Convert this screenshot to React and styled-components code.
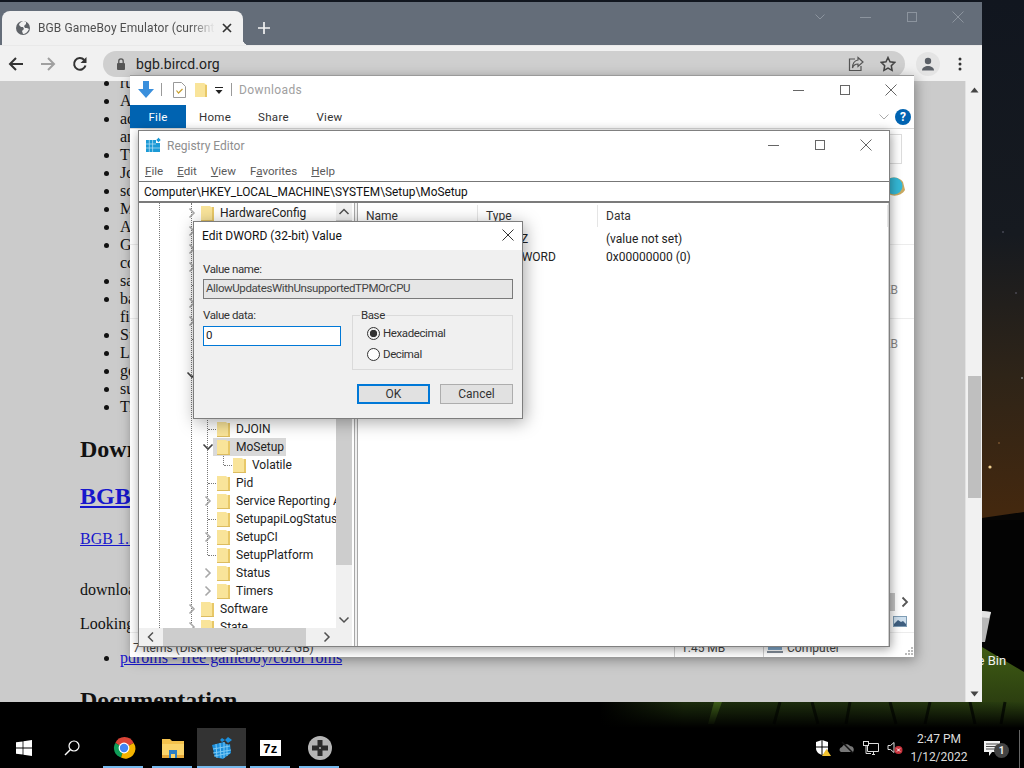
import React from "react";
import styled, { createGlobalStyle } from "styled-components";

const Global = createGlobalStyle`
  html, body { margin: 0; padding: 0; background: #000; }
  * { box-sizing: border-box; }
`;

const UI = `"Roboto", "Noto Sans", sans-serif`;

const Desktop = styled.div`
  position: relative;
  width: 1024px;
  height: 768px;
  overflow: hidden;
  display: flex;
  flex-direction: column;
  justify-content: flex-end;
  font-family: ${UI};
  font-size: 12px;
  color: #111;
`;
const Wallpaper = styled.svg`
  position: absolute;
  inset: 0;
`;
const RecycleIcon = styled.div`
  position: absolute;
  right: 15px;
  top: 604px;
  width: 72px;
  display: flex;
  flex-direction: column;
  align-items: center;
  gap: 9px;
  color: #f2f2f2;
  font-size: 13px;
  line-height: 16px;
  white-space: nowrap;
`;

/* ---------- browser ---------- */
const Browser = styled.section`
  position: absolute;
  left: 0;
  top: 2px;
  width: 982px;
  height: 700px;
  display: flex;
  flex-direction: column;
`;
const TabStrip = styled.div`
  height: 43px;
  flex: none;
  background: #646d79;
  display: flex;
  padding-left: 2px;
  padding-right: 1px;
`;
const Tab = styled.div`
  position: relative;
  align-self: flex-end;
  width: 241px;
  height: 34px;
  background: #f1f1f1;
  border-radius: 8px 8px 0 0;
  display: flex;
  align-items: center;
  padding: 0 11px 0 13px;
  gap: 7px;
  &::after {
    content: "";
    position: absolute;
    right: -6px;
    bottom: 0;
    width: 6px;
    height: 6px;
    background: radial-gradient(circle at 100% 0, transparent 6px, #f1f1f1 6.5px);
  }
`;
const TabTitle = styled.span`
  flex: 1;
  overflow: hidden;
  white-space: nowrap;
  color: #4f4f4f;
  font-size: 12px;
  letter-spacing: 0.1px;
  -webkit-mask-image: linear-gradient(90deg, #000 86%, transparent);
  mask-image: linear-gradient(90deg, #000 86%, transparent);
`;
const NewTab = styled.div`
  width: 42px;
  height: 34px;
  align-self: flex-end;
  display: flex;
  align-items: center;
  justify-content: center;
`;
const StripControls = styled.div`
  margin-left: auto;
  display: flex;
  align-self: flex-start;
`;
const StripButton = styled.div`
  width: 46px;
  height: 30px;
  display: flex;
  align-items: center;
  justify-content: center;
`;
const Toolbar = styled.div`
  height: 36px;
  flex: none;
  background: #f1f1f1;
  border-top: 1px solid #e9e9e9;
  display: flex;
  align-items: center;
  padding-right: 6px;
`;
const ToolButton = styled.div`
  width: 32px;
  height: 32px;
  flex: none;
  display: flex;
  align-items: center;
  justify-content: center;
`;
const Omnibox = styled.div`
  flex: 1;
  height: 26px;
  margin: 0 7px;
  border-radius: 13px;
  background: #cfcfcf;
  display: flex;
  align-items: center;
  padding: 0 9px 0 12px;
`;
const Url = styled.span`
  margin-left: 9px;
  font-size: 14px;
  color: #222;
  font-family: "Roboto", sans-serif;
  letter-spacing: 0.1px;
`;
const OmniIcons = styled.div`
  margin-left: auto;
  display: flex;
  gap: 16px;
  align-items: center;
`;
const Avatar = styled.div`
  width: 24px;
  height: 24px;
  border-radius: 50%;
  background: #e4e4e4;
  display: flex;
  align-items: center;
  justify-content: center;
`;
const PageArea = styled.div`
  flex: 1;
  min-height: 0;
  display: flex;
  background: #cbcbcb;
`;
const PageContent = styled.article`
  flex: 1;
  overflow: hidden;
  padding-left: 80px;
  font-family: "Liberation Serif", serif;
  font-size: 16px;
  line-height: 18px;
  color: #111;
`;
const Scrolled = styled.div`
  margin-top: -7px;
`;
const PageList = styled.ul`
  margin: 0;
  padding-left: 40px;
  white-space: nowrap;
`;
const H2 = styled.h2`
  margin: 20px 0;
  font-size: 24px;
  line-height: 27px;
  white-space: nowrap;
`;
const PageLink = styled.a`
  color: #1717cc;
  text-decoration: underline;
`;
const Para = styled.p`
  margin: 0 0 16px;
  white-space: nowrap;
`;
const SpacedPara = styled(Para)`
  margin-top: 33px;
`;
const PageScrollbar = styled.div`
  width: 17px;
  flex: none;
  background: #f1f1f1;
  border-left: 1px solid #e2e2e2;
  display: flex;
  flex-direction: column;
  align-items: center;
`;
const PageArrow = styled.div`
  height: 17px;
  flex: none;
  display: flex;
  align-items: center;
  justify-content: center;
  margin-top: ${p => (p.$bottom ? "auto" : "0")};
`;
const PageThumb = styled.div`
  width: 13px;
  height: 122px;
  margin-top: 278px;
  background: #bfbfbf;
`;

/* ---------- shared window parts ---------- */
const WinButton = styled.div`
  width: 46px;
  height: 30px;
  flex: none;
  display: flex;
  align-items: center;
  justify-content: center;
`;
const WinButtons = styled.div`
  margin-left: auto;
  display: flex;
`;

/* ---------- explorer ---------- */
const Explorer = styled.section`
  position: absolute;
  left: 130px;
  top: 75px;
  width: 784px;
  height: 582px;
  background: #fff;
  box-shadow: 2px 3px 12px rgba(0, 0, 0, 0.35);
  border-top: 1px solid #9a9a9a;
  display: flex;
  flex-direction: column;
`;
const QatBar = styled.div`
  height: 29px;
  flex: none;
  display: flex;
  align-items: center;
  padding-left: 8px;
  padding-bottom: 2px;
`;
const QatItem = styled.span`
  display: flex;
  align-items: center;
  margin-left: ${p => p.$ml || 0}px;
`;
const QatSep = styled.span`
  width: 1px;
  height: 13px;
  background: #9a9a9a;
  margin-left: ${p => p.$ml}px;
`;
const ExplorerTitle = styled.span`
  margin-left: 7px;
  color: #a0a0a0;
  font-size: 12px;
  letter-spacing: 0.4px;
`;
const RibbonTabs = styled.div`
  height: 24px;
  flex: none;
  display: flex;
  border-bottom: 1px solid #dadada;
  align-items: stretch;
`;
const RibbonTab = styled.div`
  width: ${p => p.$w}px;
  height: 23px;
  display: flex;
  align-items: center;
  justify-content: center;
  font-size: 11.5px;
  letter-spacing: 0.3px;
  background: ${p => (p.$active ? "#0063b1" : "transparent")};
  color: ${p => (p.$active ? "#fff" : "#333")};
`;
const RibbonRight = styled.div`
  margin-left: auto;
  display: flex;
  align-items: center;
  gap: 5px;
  padding-right: 3px;
`;
const HelpBadge = styled.span`
  width: 16px;
  height: 16px;
  border-radius: 50%;
  background: #0063b1;
  color: #fff;
  font-weight: 700;
  font-size: 12px;
  line-height: 16px;
  text-align: center;
`;
const ExplorerNav = styled.div`
  height: 40px;
  flex: none;
  display: flex;
  justify-content: flex-end;
  padding: 5px 12px 5px 0;
`;
const SearchBox = styled.div`
  width: 120px;
  height: 30px;
  border: 1px solid #dcdcdc;
`;
const GlobeRow = styled.div`
  height: 76px;
  flex: none;
  display: flex;
  justify-content: flex-end;
  padding: 7px 9px 0 0;
  border-bottom: 1px solid #ececec;
`;
const FileRow = styled.div`
  height: ${p => p.$h}px;
  flex: none;
  padding-top: ${p => p.$pt}px;
  padding-right: 16px;
  text-align: right;
  line-height: 16px;
  color: #888;
  border-bottom: 1px solid ${p => (p.$line ? "#ececec" : "transparent")};
`;
const ExplorerBottom = styled.div`
  margin-top: auto;
  display: flex;
  flex-direction: column;
`;
const ExplorerScroll = styled.div`
  height: 18px;
  display: flex;
  align-items: center;
  padding-right: 3px;
`;
const ExplorerThumb = styled.div`
  width: 45px;
  height: 18px;
  margin-left: 720px;
  background: #c4c4c4;
`;
const ExplorerScrollEnd = styled.div`
  margin-left: auto;
`;
const ViewRow = styled.div`
  height: 22px;
  display: flex;
  justify-content: flex-end;
  align-items: center;
  padding-right: 7px;
  border-bottom: 1px solid #ececec;
`;
const StatusBar = styled.div`
  position: relative;
  height: 24px;
  display: grid;
  grid-template-columns: 544px 89px 1fr;
  align-items: end;
  line-height: 18px;
  color: #444;
  background: #fff;
`;
const StatusCell = styled.div`
  height: 18px;
  display: flex;
  align-items: center;
  gap: 4px;
  padding-left: ${p => p.$pl}px;
  border-left: 1px solid ${p => (p.$sep ? "#cfcfcf" : "transparent")};
  white-space: nowrap;
`;
const Grip = styled.svg`
  position: absolute;
  right: 1px;
  bottom: 2px;
`;

/* ---------- regedit ---------- */
const Regedit = styled.section`
  position: absolute;
  left: 138px;
  top: 130px;
  width: 752px;
  height: 517px;
  background: #fff;
  border: 1px solid #808080;
  box-shadow: 1px 2px 10px rgba(0, 0, 0, 0.4);
  display: flex;
  flex-direction: column;
`;
const RegTitleBar = styled.div`
  height: 30px;
  flex: none;
  display: flex;
  align-items: center;
  padding-left: 7px;
  padding-bottom: 2px;
  gap: 5px;
`;
const RegTitle = styled.span`
  color: #8e8e8e;
  font-size: 12px;
  margin-top: 1px;
`;
const MenuBar = styled.div`
  height: 20px;
  flex: none;
  display: flex;
  align-items: center;
  gap: 14px;
  padding-left: 6px;
  color: #5a5a5a;
  font-size: 11.6px;
`;
const AddressBar = styled.div`
  height: 22px;
  flex: none;
  border-top: 1px solid #777;
  border-bottom: 2px solid #7b7b7b;
  display: flex;
  align-items: center;
  padding-left: 5px;
  font-size: 11.85px;
  color: #111;
  white-space: nowrap;
`;
const Panes = styled.div`
  flex: 1;
  min-height: 0;
  display: flex;
`;
const TreePane = styled.div`
  width: 215px;
  flex: none;
  display: grid;
  grid-template-columns: 197px 16px 2px;
  grid-template-rows: 1fr 18px;
  min-height: 0;
`;
const TreeClip = styled.div`
  position: relative;
  overflow: hidden;
  min-height: 0;
  padding-top: 1px;
`;
const TreeLine = styled.div`
  position: absolute;
  left: ${p => p.$x}px;
  top: ${p => p.$top}px;
  height: ${p => p.$h}px;
  border-left: 1px dotted #777;
`;
const TreeRowBox = styled.div`
  position: relative;
  height: 18px;
  display: flex;
  align-items: center;
  padding-left: ${p => 29 + p.$level * 16}px;
  white-space: nowrap;
  color: #222;
  line-height: 18px;
`;
const ChevBox = styled.span`
  width: 16px;
  height: 18px;
  flex: none;
  display: flex;
  align-items: center;
  justify-content: center;
`;
const LeafDots = styled.span`
  width: 8px;
  margin-left: auto;
  border-top: 1px dotted #777;
`;
const RowBody = styled.span`
  height: 18px;
  display: flex;
  align-items: center;
  gap: 4px;
  margin-left: -3px;
  padding: 0 2px 0 3px;
  background: ${p => (p.$selected ? "#d9d9d9" : "transparent")};
`;
const VScroll = styled.div`
  background: #f0f0f0;
  display: flex;
  flex-direction: column;
  align-items: center;
`;
const ScrollEnd = styled.div`
  height: 17px;
  width: 100%;
  flex: none;
  display: flex;
  align-items: center;
  justify-content: center;
  margin-top: ${p => (p.$bottom ? "auto" : "0")};
`;
const VThumb = styled.div`
  width: 100%;
  height: 345px;
  background: #cdcdcd;
`;
const HScroll = styled.div`
  grid-column: 1 / 3;
  background: #f0f0f0;
  display: flex;
  align-items: center;
`;
const HEnd = styled.div`
  width: 24px;
  height: 18px;
  flex: none;
  display: flex;
  align-items: center;
  justify-content: center;
`;
const HThumb = styled.div`
  width: 143px;
  height: 18px;
  background: #cdcdcd;
`;
const HEndRight = styled(HEnd)`
  margin-left: 9px;
`;
const Splitter = styled.div`
  width: 4px;
  flex: none;
  background: #f0f0f0;
  border-left: 1px solid #a8a8a8;
  border-right: 1px solid #a8a8a8;
`;
const ListPane = styled.div`
  flex: 1;
  min-width: 0;
  border-right: 1px solid #cfcfcf;
`;
const ListGrid = styled.div`
  display: grid;
  grid-template-columns: 120px 120px 1fr;
  height: ${p => (p.$header ? 27 : 18)}px;
  align-items: ${p => (p.$header ? "start" : "center")};
  white-space: nowrap;
  color: #222;
`;
const ListHeaderCell = styled.div`
  padding-left: 8px;
  height: 22px;
  margin-top: 2px;
  line-height: 22px;
  border-right: 1px solid #e5e5e5;
  color: #333;
`;
const ListCell = styled.div`
  padding-left: 8px;
  overflow: hidden;
`;

/* ---------- dialog ---------- */
const Dialog = styled.section`
  position: absolute;
  left: 193px;
  top: 221px;
  width: 330px;
  height: 198px;
  background: #f0f0f0;
  border: 1px solid #7d7d7d;
  box-shadow: 2px 3px 16px rgba(0, 0, 0, 0.35);
  display: flex;
  flex-direction: column;
`;
const DialogTitle = styled.div`
  height: 28px;
  flex: none;
  background: #fff;
  display: flex;
  align-items: center;
  justify-content: space-between;
  padding: 0 8px;
  color: #111;
`;
const DialogClose = styled.span`
  display: block;
  margin-top: -2px;
`;
const DialogBody = styled.div`
  flex: 1;
  padding: 11px 9px 0;
  display: flex;
  flex-direction: column;
  font-size: 11.5px;
  letter-spacing: -0.4px;
`;
const FieldLabel = styled.label`
  display: block;
  height: 16px;
  line-height: 16px;
  color: #333;
`;
const NameField = styled.div`
  height: 20px;
  margin-top: 2px;
  padding-left: 2px;
  line-height: 17px;
  background: #e6e6e6;
  border: 1px solid #7a7a7a;
  color: #444;
  white-space: nowrap;
  overflow: hidden;
`;
const DataRow = styled.div`
  margin-top: 8px;
  display: flex;
  gap: 11px;
`;
const DataCol = styled.div`
  width: 138px;
  flex: none;
`;
const DataField = styled.div`
  height: 20px;
  margin-top: 3px;
  padding-left: 2px;
  line-height: 17px;
  background: #fff;
  border: 1px solid #0078d7;
  color: #222;
`;
const BaseGroup = styled.fieldset`
  flex: 1;
  margin: 0;
  height: 63px;
  padding: 1px 0 0 14px;
  border: 1px solid #dadada;
  min-width: 0;
`;
const BaseLegend = styled.legend`
  margin-left: -7px;
  padding: 0 1px;
  line-height: 16px;
  color: #333;
`;
const RadioRow = styled.div`
  height: 18px;
  margin-bottom: 3px;
  display: flex;
  align-items: center;
  gap: 3px;
  color: #333;
`;
const RadioDot = styled.span`
  width: 13px;
  height: 13px;
  border: 1px solid #333;
  border-radius: 50%;
  background: ${p => (p.$on ? "radial-gradient(circle, #333 0 3.4px, transparent 4px)" : "#fff")};
`;
const DialogButtons = styled.div`
  margin-top: 14px;
  display: flex;
  justify-content: flex-end;
  gap: 10px;
`;
const DialogButton = styled.button`
  width: 73px;
  height: 20px;
  padding: 0 0 1px;
  font: inherit;
  font-size: 12px;
  letter-spacing: 0;
  color: #333;
  background: #e1e1e1;
  border: ${p => (p.$primary ? "2px solid #0078d7" : "1px solid #adadad")};
`;

/* ---------- taskbar ---------- */
const Taskbar = styled.footer`
  position: relative;
  height: 40px;
  flex: none;
  background: #000;
  display: flex;
  align-items: stretch;
`;
const BarButton = styled.div`
  position: relative;
  width: ${p => p.$w || 49}px;
  flex: none;
  display: flex;
  align-items: center;
  justify-content: center;
  background: ${p => (p.$active ? "#333" : "transparent")};
  &::after {
    content: ${p => (p.$running ? '""' : "none")};
    position: absolute;
    left: ${p => (p.$active ? 0 : 4)}px;
    right: ${p => (p.$active ? 0 : 5)}px;
    bottom: 0;
    height: 2px;
    background: #76b9ed;
  }
`;
const AppsGap = styled.div`
  width: 3px;
  flex: none;
`;
const SevenZip = styled.span`
  width: 21px;
  height: 16px;
  background: #fff;
  color: #000;
  display: flex;
  align-items: center;
  justify-content: center;
  font-family: "Liberation Sans", sans-serif;
  font-weight: 700;
  font-size: 13px;
  letter-spacing: 0.5px;
`;
const Tray = styled.div`
  margin-left: auto;
  display: flex;
  align-items: stretch;
`;
const TrayIcon = styled.div`
  width: 24px;
  display: flex;
  align-items: center;
  justify-content: center;
`;
const Clock = styled.div`
  width: 64px;
  display: flex;
  flex-direction: column;
  align-items: center;
  justify-content: center;
  color: #dcdcdc;
  font-size: 12px;
  line-height: 18px;
  white-space: nowrap;
`;
const NotifyBox = styled.div`
  position: relative;
  width: 42px;
  display: flex;
  align-items: center;
  justify-content: center;
`;
const NotifyBadge = styled.span`
  position: absolute;
  left: 23px;
  top: 15px;
  width: 15px;
  height: 15px;
  border-radius: 50%;
  background: #444;
  color: #eee;
  font-size: 10px;
  font-weight: 700;
  line-height: 15px;
  text-align: center;
`;
const ShowDesktop = styled.div`
  width: 5px;
  margin-left: 6px;
  margin-top: 2px;
  border-left: 1px solid #666;
`;

/* ---------- icons ---------- */
const Svg = ({ w, h, vb, children }) => (
  <svg width={w} height={h} viewBox={vb || `0 0 ${w} ${h}`} style={{ display: "block", flex: "none" }}>{children}</svg>
);
const Line = ({ d, c = "#444", s = 1 }) => <path d={d} fill="none" stroke={c} strokeWidth={s} />;

const Globe = () => (
  <Svg w={16} h={16}>
    <circle cx="8" cy="8" r="7" fill="#5f6368" />
    <path d="M8 1c-2 1-4 2-4 4l2 2 2 0 1 2-2 2 1 3c2 0 5-2 6-5l-2-1-2 0-1-2 2-2 0-2C10 1 9 1 8 1z" fill="#f1f1f1" />
  </Svg>
);
const Chev = ({ dir = "r", c = "#a8a8a8", s = 1.6 }) => {
  const d = { r: "M3.5 1.5 8 6l-4.5 4.5", l: "M8 1.5 3.5 6 8 10.5", d: "M1.5 3.5 6 8l4.5-4.5", u: "M1.5 8 6 3.5 10.5 8" }[dir];
  return <Svg w={12} h={12}><Line d={d} c={c} s={s} /></Svg>;
};
const MinI = ({ c = "#666" }) => <Svg w={12} h={12}><Line d="M0 6.5h11" c={c} /></Svg>;
const MaxI = ({ c = "#666" }) => <Svg w={12} h={12}><rect x="1.5" y="1.5" width="9" height="9" fill="none" stroke={c} /></Svg>;
const CloseI = ({ c = "#666", s = 1 }) => <Svg w={12} h={12}><Line d="M.5.5l11 11M11.5.5l-11 11" c={c} s={s} /></Svg>;
const RegFolder = () => (
  <Svg w={16} h={18}>
    <path d="M1 2h9l1 1h3v14H1z" fill="#f9e49a" />
    <path d="M12 3h2v14h-2z" fill="#e8c868" />
    <path d="M1 16h13v1H1z" fill="#dcbc60" />
  </Svg>
);
const TriUp = () => <Svg w={9} h={6}><path d="M.5 5.5h8L4.5.5z" fill="#444" /></Svg>;
const TriDown = () => <Svg w={9} h={6}><path d="M.5.5h8l-4 5z" fill="#444" /></Svg>;
const RegCubes = () => (
  <Svg w={16} h={16}>
    <path d="M0 3h10v12H0z" fill="#1b9ad6" />
    <path d="M3.3 3v12M6.6 3v12M0 7h10M0 11h10" stroke="#bfe3f5" strokeWidth=".7" />
    <path d="M10 6h4v9h-4z" fill="#1b9ad6" />
    <path d="M10 11h4" stroke="#bfe3f5" strokeWidth=".7" />
    <path d="M12.5 .5l2.5 2.5-2.5 2.5L10 3z" fill="#1b9ad6" stroke="#fff" strokeWidth=".5" />
  </Svg>
);
const RegCluster = () => (
  <Svg w={22} h={24}>
    <path d="M1 9 13 6l3 3 3-1 1 9-8 6-8-2z" fill="#1c8fdc" />
    <path d="M5 8 6 22M9 7l1 15M13 6l0 16M16 8l0 12M2 13l17-3M2 17l18-3M3 20l16-3" stroke="#7ccaf5" strokeWidth="1" />
    <path d="M17 1l4 3-4 3-3-3z" fill="#1c8fdc" />
    <path d="M11 2l3 2-3 2-2-2z" fill="#1c8fdc" />
  </Svg>
);

const treeRows = [
  [1, "HardwareConfig", "r"], [1, "Input", "r"], [1, "Keyboard Layout", "r"], [1, "Maps", "r"],
  [1, "MountedDevices", "n"], [1, "ResourceManager", "r"], [1, "ResourcePolicyStore", "r"],
  [1, "RNG", "n"], [1, "Select", "n"], [1, "Setup", "d"],
  [2, "AllowStart", "n"], [2, "Compatibility", "n"], [2, "DJOIN", "n"], [2, "MoSetup", "d", true],
  [3, "Volatile", "n"], [2, "Pid", "n"], [2, "Service Reporting API", "r"], [2, "SetupapiLogStatus", "n"],
  [2, "SetupCI", "r"], [2, "SetupPlatform", "n"], [2, "Status", "r"], [2, "Timers", "r"],
  [1, "Software", "r"], [1, "State", "r"],
];

const TreeRow = ({ level, name, kind, selected }) => (
  <TreeRowBox $level={level}>
    <ChevBox>
      {kind === "r" && <Chev dir="r" />}
      {kind === "d" && <Chev dir="d" c="#404040" />}
      {kind === "n" && <LeafDots />}
    </ChevBox>
    <RowBody $selected={selected}>
      <RegFolder />
      {name}
    </RowBody>
  </TreeRowBox>
);

const ChromeLogo = () => (
  <Svg w={24} h={24}>
    <path d="M12 12 3.3 7A10 10 0 0 1 21.7 7z" fill="#db4437" />
    <path d="M12 12 3.3 7A10 10 0 0 0 9 21.6z" fill="#0f9d58" />
    <path d="M12 12 21.7 7A10 10 0 0 1 9 21.6z" fill="#f4b400" />
    <circle cx="12" cy="12" r="5.4" fill="#fff" />
    <circle cx="12" cy="12" r="4.2" fill="#4285f4" />
  </Svg>
);

export default function App() {
  return (
    <Desktop>
      <Global />
      <Wallpaper width="1024" height="768" viewBox="0 0 1024 768">
        <defs>
          <linearGradient id="sky" x1="0" y1="0" x2="0" y2="1">
            <stop offset="0" stopColor="#11161f" />
            <stop offset=".45" stopColor="#161a20" />
            <stop offset=".72" stopColor="#2e2418" />
            <stop offset=".98" stopColor="#43280f" />
          </linearGradient>
          <linearGradient id="hill" x1="0" y1="0" x2="0" y2="1">
            <stop offset="0" stopColor="#3f5c14" />
            <stop offset="1" stopColor="#2c3f10" />
          </linearGradient>
          <linearGradient id="grass" x1="0" y1="0" x2="1" y2="0">
            <stop offset="0" stopColor="#000" />
            <stop offset=".2" stopColor="#1b2b0c" />
            <stop offset=".6" stopColor="#1e2e0e" />
            <stop offset="1" stopColor="#2a3f10" />
          </linearGradient>
          <linearGradient id="fade" x1="0" y1="0" x2="0" y2="1">
            <stop offset="0" stopColor="#000" stopOpacity="0" />
            <stop offset="1" stopColor="#000" stopOpacity="1" />
          </linearGradient>
        </defs>
        <rect width="1024" height="768" fill="#000" />
        <rect width="1024" height="520" fill="url(#sky)" />
        <path d="M982 518 1024 512V540H982z" fill="#070605" />
        <rect y="520" width="1024" height="130" fill="#030303" />
        <path d="M982 647 1024 672V702H982z" fill="url(#hill)" />
        <rect x="600" y="702" width="424" height="26" fill="url(#grass)" />
        <path d="M714 702h8l-8 22h-6z" fill="#3c5c18" />
        <path d="M780 702l-6 22M812 702l6 22M850 702l-4 22M890 702l6 22M930 702l-5 22M970 702l5 22M1005 702l-4 22" stroke="#0a1204" strokeWidth="3" />
        <rect x="600" y="702" width="424" height="26" fill="url(#fade)" />
        <circle cx="990" cy="467" r="1.6" fill="#f0d090" />
        <circle cx="999" cy="443" r=".8" fill="#a07040" />
        <circle cx="1022" cy="378" r="1" fill="#888" />
        <circle cx="1003" cy="232" r=".8" fill="#667" />
        <circle cx="1016" cy="293" r=".8" fill="#667" />
      </Wallpaper>

      <RecycleIcon>
        <Svg w={40} h={40}>
          <path d="M4 4 38 8 32 38 8 38z" fill="#b8b8b8" />
          <path d="M4 4 38 8 36 14 6 11z" fill="#e4e4e4" />
        </Svg>
        <span>Recycle Bin</span>
      </RecycleIcon>

      <Browser>
        <TabStrip>
          <Tab>
            <Globe />
            <TabTitle>BGB GameBoy Emulator (current version)</TabTitle>
            <Svg w={10} h={10}><Line d="M1 1l8 8M9 1l-8 8" c="#333" s={1.7} /></Svg>
          </Tab>
          <NewTab>
            <Svg w={12} h={12}><Line d="M6 0v12M0 6h12" c="#f3f3f3" s={1.7} /></Svg>
          </NewTab>
          <StripControls>
            <StripButton><Chev dir="d" c="#8c949e" s={1} /></StripButton>
            <StripButton><MinI c="#8c949e" /></StripButton>
            <StripButton><MaxI c="#8c949e" /></StripButton>
            <StripButton><CloseI c="#8c949e" /></StripButton>
          </StripControls>
        </TabStrip>
        <Toolbar>
          <ToolButton>
            <Svg w={16} h={16}><Line d="M15 8H2M8 2 2 8l6 6" c="#333" s={2} /></Svg>
          </ToolButton>
          <ToolButton>
            <Svg w={16} h={16}><Line d="M1 8h13M8 2l6 6-6 6" c="#a0a0a0" s={2} /></Svg>
          </ToolButton>
          <ToolButton>
            <Svg w={16} h={16}>
              <Line d="M13.5 9.5A5.8 5.8 0 1 1 12.2 4" c="#333" s={2} />
              <path d="M14.5 1v6h-6z" fill="#333" />
            </Svg>
          </ToolButton>
          <Omnibox>
            <Svg w={12} h={14}>
              <rect x="2" y="6" width="8" height="7" rx="1" fill="#555" />
              <Line d="M3.8 6V4a2.2 2.2 0 0 1 4.4 0v2" c="#555" s={1.3} />
            </Svg>
            <Url>bgb.bircd.org</Url>
            <OmniIcons>
              <Svg w={16} h={16}>
                <Line d="M7 3H1.500v11.500H13V10" c="#555" s={1.2} />
                <Line d="M10 1.500 15 6l-5 4.500V8C7.500 8 5.500 9 4.500 12c0-5 2.500-7.500 5.500-8z" c="#555" s={1.2} />
              </Svg>
              <Svg w={16} h={16}>
                <Line d="M8 1.500l2 4.300 4.700.6-3.400 3.300.8 4.700L8 12.100l-4.100 2.300.8-4.700L1.300 6.400 6 5.800z" c="#444" s={1.5} />
              </Svg>
            </OmniIcons>
          </Omnibox>
          <ToolButton>
            <Avatar>
              <Svg w={14} h={14}>
                <circle cx="7" cy="4" r="3.2" fill="#5a5f66" />
                <path d="M1 13.500c0-3 3-4.500 6-4.500s6 1.500 6 4.500z" fill="#5a5f66" />
              </Svg>
            </Avatar>
          </ToolButton>
          <ToolButton>
            <Svg w={4} h={14}>
              <circle cx="2" cy="2" r="1.500" fill="#333" />
              <circle cx="2" cy="7" r="1.500" fill="#333" />
              <circle cx="2" cy="12" r="1.500" fill="#333" />
            </Svg>
          </ToolButton>
        </Toolbar>
        <PageArea>
          <PageContent>
            <Scrolled>
              <PageList>
                <li>runs on Windows and under Wine</li>
                <li>Accurate emulation</li>
                <li>accurate timing of memory and video<br />and sound</li>
                <li>Turbo mode</li>
                <li>Joypad support</li>
                <li>sound output</li>
                <li>Memory viewer</li>
                <li>Assembler</li>
                <li>Game Genie and GameShark<br />codes</li>
                <li>save states</li>
                <li>battery saves<br />file support</li>
                <li>Super Game Boy</li>
                <li>Link cable</li>
                <li>good debugger</li>
                <li>supports zipped roms</li>
                <li>Tile viewer</li>
              </PageList>
              <H2>Downloads</H2>
              <H2><PageLink href="#bgb">BGB 1.5.9</PageLink></H2>
              <Para><PageLink href="#zip">BGB 1.5.9 zip file</PageLink></Para>
              <SpacedPara>downloads</SpacedPara>
              <Para>Looking for roms?</Para>
              <PageList>
                <li><PageLink href="#pd">pdroms - free gameboy/color roms</PageLink></li>
              </PageList>
              <H2>Documentation</H2>
            </Scrolled>
          </PageContent>
          <PageScrollbar>
            <PageArrow><TriUp /></PageArrow>
            <PageThumb />
            <PageArrow $bottom><TriDown /></PageArrow>
          </PageScrollbar>
        </PageArea>
      </Browser>

      <Explorer>
        <QatBar>
          <QatItem>
            <Svg w={16} h={17}><path d="M5 0h6v8h5l-8 9-8-9h5z" fill="#3a8fdc" /></Svg>
          </QatItem>
          <QatSep $ml={7} />
          <QatItem $ml={11}>
            <Svg w={13} h={16}>
              <path d="M.5.5h8l4 4v11H.5z" fill="#fff" stroke="#999" />
              <Line d="M3.500 8.500 5.500 11l4-4" c="#c8a030" s={1.2} />
            </Svg>
          </QatItem>
          <QatItem $ml={8}>
            <Svg w={14} h={16}>
              <path d="M1 1h9l3 2v12H1z" fill="#f9e49a" />
              <path d="M11 3h2v12h-2z" fill="#e8c868" />
            </Svg>
          </QatItem>
          <QatItem $ml={7}>
            <Svg w={8} h={8}>
              <path d="M0 1h8v1H0z" fill="#222" />
              <path d="M.5 4h7L4 8z" fill="#222" />
            </Svg>
          </QatItem>
          <QatSep $ml={8} />
          <ExplorerTitle>Downloads</ExplorerTitle>
          <WinButtons>
            <WinButton><MinI /></WinButton>
            <WinButton><MaxI /></WinButton>
            <WinButton><CloseI /></WinButton>
          </WinButtons>
        </QatBar>
        <RibbonTabs>
          <RibbonTab $w={56} $active>File</RibbonTab>
          <RibbonTab $w={58}>Home</RibbonTab>
          <RibbonTab $w={59}>Share</RibbonTab>
          <RibbonTab $w={53}>View</RibbonTab>
          <RibbonRight>
            <Chev dir="d" c="#aaa" s={1} />
            <HelpBadge>?</HelpBadge>
          </RibbonRight>
        </RibbonTabs>
        <ExplorerNav><SearchBox /></ExplorerNav>
        <GlobeRow>
          <Svg w={22} h={22}>
            <path d="M2 6 C6 0 16 0 20 6 L22 14 C18 21 6 22 2 14z" fill="#c9a860" />
            <circle cx="11" cy="10" r="8.500" fill="#35b8d6" />
          </Svg>
        </GlobeRow>
        <FileRow $h={74} $pt={37} $line>
          12 KB
        </FileRow>
        <FileRow $h={53} $pt={17}>
          38 KB
        </FileRow>
        <ExplorerBottom>
          <ExplorerScroll>
            <ExplorerThumb />
            <ExplorerScrollEnd><Chev dir="r" c="#555" s={1.8} /></ExplorerScrollEnd>
          </ExplorerScroll>
          <ViewRow>
            <Svg w={14} h={11}>
              <rect x=".5" y=".5" width="13" height="10" fill="#cfe0ee" stroke="#7f9db5" />
              <path d="M1 8 5 4l3 2 2-1 3 3v2H1z" fill="#3f5f80" />
            </Svg>
          </ViewRow>
          <StatusBar>
            <StatusCell $pl={2}>7 items (Disk free space: 60.2 GB)</StatusCell>
            <StatusCell $pl={6} $sep>1.45 MB</StatusCell>
            <StatusCell $pl={3} $sep>
              <Svg w={16} h={12}>
                <rect x="1" y="1" width="14" height="7" fill="#7fa6c8" />
                <rect x="0" y="9" width="16" height="2" fill="#7f8a96" />
              </Svg>
              Computer
            </StatusCell>
            <Grip width="8" height="8" viewBox="0 0 8 8">
              <path d="M6 0h2v2H6zM3 3h2v2H3zM6 3h2v2H6zM0 6h2v2H0zM3 6h2v2H3zM6 6h2v2H6z" fill="#bbb" />
            </Grip>
          </StatusBar>
        </ExplorerBottom>
      </Explorer>

      <Regedit>
        <RegTitleBar>
          <RegCubes />
          <RegTitle>Registry Editor</RegTitle>
          <WinButtons>
            <WinButton><MinI /></WinButton>
            <WinButton><MaxI /></WinButton>
            <WinButton><CloseI /></WinButton>
          </WinButtons>
        </RegTitleBar>
        <MenuBar>
          <span><u>F</u>ile</span>
          <span><u>E</u>dit</span>
          <span><u>V</u>iew</span>
          <span>F<u>a</u>vorites</span>
          <span><u>H</u>elp</span>
        </MenuBar>
        <AddressBar>Computer\HKEY_LOCAL_MACHINE\SYSTEM\Setup\MoSetup</AddressBar>
        <Panes>
          <TreePane>
            <TreeClip>
              <TreeLine $x={20} $top={0} $h={425} />
              <TreeLine $x={52} $top={0} $h={420} />
              <TreeLine $x={68} $top={180} $h={172} />
              <TreeLine $x={84} $top={252} $h={10} />
              {treeRows.map(([level, name, kind, selected]) => (
                <TreeRow key={name} level={level} name={name} kind={kind} selected={selected} />
              ))}
            </TreeClip>
            <VScroll>
              <ScrollEnd><Chev dir="u" c="#505050" s={1.5} /></ScrollEnd>
              <VThumb />
              <ScrollEnd $bottom><Chev dir="d" c="#505050" s={1.5} /></ScrollEnd>
            </VScroll>
            <div />
            <HScroll>
              <HEnd><Chev dir="l" c="#505050" s={1.5} /></HEnd>
              <HThumb />
              <HEndRight><Chev dir="r" c="#505050" s={1.5} /></HEndRight>
            </HScroll>
          </TreePane>
          <Splitter />
          <ListPane>
            <ListGrid $header>
              <ListHeaderCell>Name</ListHeaderCell>
              <ListHeaderCell>Type</ListHeaderCell>
              <ListHeaderCell>Data</ListHeaderCell>
            </ListGrid>
            <ListGrid>
              <ListCell>(Default)</ListCell>
              <ListCell>REG_SZ</ListCell>
              <ListCell>(value not set)</ListCell>
            </ListGrid>
            <ListGrid>
              <ListCell>AllowUpdatesWithUnsupportedTPMOrCPU</ListCell>
              <ListCell>REG_DWORD</ListCell>
              <ListCell>0x00000000 (0)</ListCell>
            </ListGrid>
          </ListPane>
        </Panes>
      </Regedit>

      <Dialog>
        <DialogTitle>
          Edit DWORD (32-bit) Value
          <DialogClose><CloseI c="#333" /></DialogClose>
        </DialogTitle>
        <DialogBody>
          <FieldLabel>Value name:</FieldLabel>
          <NameField>AllowUpdatesWithUnsupportedTPMOrCPU</NameField>
          <DataRow>
            <DataCol>
              <FieldLabel>Value data:</FieldLabel>
              <DataField>0</DataField>
            </DataCol>
            <BaseGroup>
              <BaseLegend>Base</BaseLegend>
              <RadioRow><RadioDot $on />Hexadecimal</RadioRow>
              <RadioRow><RadioDot />Decimal</RadioRow>
            </BaseGroup>
          </DataRow>
          <DialogButtons>
            <DialogButton $primary>OK</DialogButton>
            <DialogButton>Cancel</DialogButton>
          </DialogButtons>
        </DialogBody>
      </Dialog>

      <Taskbar>
        <BarButton $w={48}>
          <Svg w={16} h={16}>
            <path d="M0 2.300 6.600 1.400V7.600H0zM7.400 1.300 16 0V7.600H7.400zM0 8.400H6.600V14.600L0 13.700zM7.400 8.400H16V16L7.400 14.700z" fill="#fff" />
          </Svg>
        </BarButton>
        <BarButton $w={48}>
          <Svg w={16} h={16}>
            <circle cx="10" cy="6" r="5" fill="none" stroke="#fff" strokeWidth="1.200" />
            <Line d="M6.500 9.500 1 15" c="#fff" s={1.500} />
          </Svg>
        </BarButton>
        <AppsGap />
        <BarButton $running><ChromeLogo /></BarButton>
        <BarButton $running>
          <Svg w={22} h={20}>
            <path d="M0 1h8l2 2h12v17H0z" fill="#f4c24d" />
            <path d="M0 6h22v14H0z" fill="#fbd46a" />
            <path d="M7 12h8v8h-2v-4H9v4H7z" fill="#2f7fc4" />
            <path d="M0 17h7v3H0zM15 17h7v3h-7z" fill="#e6a93a" />
          </Svg>
        </BarButton>
        <BarButton $running $active><RegCluster /></BarButton>
        <BarButton $running><SevenZip>7z</SevenZip></BarButton>
        <BarButton $running>
          <Svg w={24} h={24}>
            <circle cx="12" cy="12" r="12" fill="#b5b5b5" />
            <path d="M9.500 4h5v5.500H20v5h-5.500V20h-5v-5.500H4v-5h5.500z" fill="#2d2d2d" />
            <circle cx="12" cy="12" r="1" fill="#b5b5b5" />
          </Svg>
        </BarButton>
        <Tray>
          <TrayIcon>
            <Svg w={16} h={18}>
              <path d="M7 1 13 3v6c0 4-3 6-6 7-3-1-6-3-6-7V3z" fill="#fff" />
              <path d="M7 1v15M1 8h12" stroke="#000" strokeWidth="1" />
              <path d="M11.500 10 16 17H7z" fill="#f4c430" />
            </Svg>
          </TrayIcon>
          <TrayIcon>
            <Svg w={16} h={14}>
              <path d="M2 11c-2-1-2-4 1-5 1-3 6-4 8-1 3 0 5 3 3 6z" fill="#777" />
              <Line d="M3 1l11 11" c="#111" s={1.500} />
            </Svg>
          </TrayIcon>
          <TrayIcon>
            <Svg w={16} h={14}>
              <path d="M4.500 2.500H15.500V10.500H4.500zM9 13.500H12M10.500 10.500V13.500" fill="none" stroke="#ddd" />
              <rect x=".5" y=".5" width="5" height="4" fill="#000" stroke="#ddd" />
              <Line d="M3 4.500V12.500H8" c="#ddd" />
            </Svg>
          </TrayIcon>
          <TrayIcon>
            <Svg w={16} h={14}>
              <path d="M1 4.500H3.500L7 1.500V11.500L3.500 8.500H1z" fill="none" stroke="#ddd" />
              <circle cx="11.500" cy="9" r="4" fill="#c8323c" />
              <Line d="M10 7.500l3 3M13 7.500l-3 3" c="#fff" />
            </Svg>
          </TrayIcon>
          <Clock>
            <span>2:47 PM</span>
            <span>1/12/2022</span>
          </Clock>
          <NotifyBox>
            <Svg w={16} h={15}>
              <path d="M0 0h16v11H8l-3 4v-4H0z" fill="#f2f2f2" />
              <path d="M2 3h12M2 5.500h12M2 8h8" stroke="#222" strokeWidth=".8" />
            </Svg>
            <NotifyBadge>1</NotifyBadge>
          </NotifyBox>
          <ShowDesktop />
        </Tray>
      </Taskbar>
    </Desktop>
  );
}
